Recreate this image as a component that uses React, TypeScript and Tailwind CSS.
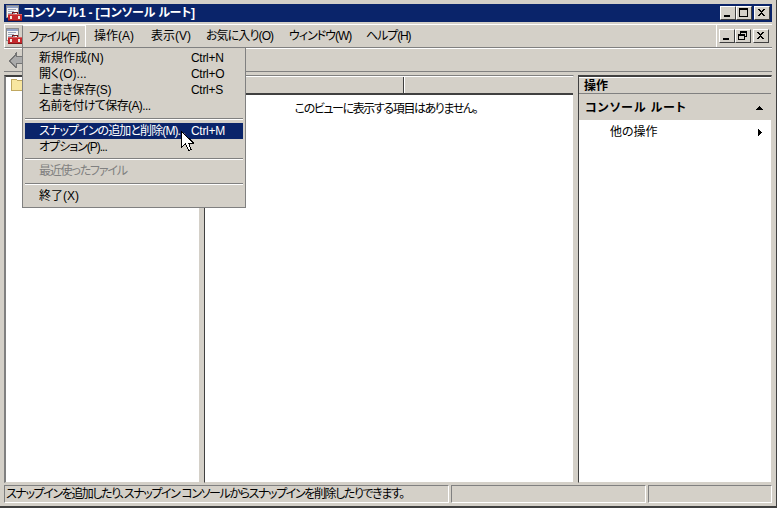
const FONT = "font-['Liberation_Sans','Noto_Sans_CJK_JP',sans-serif] [font-feature-settings:'palt']";

function AppIcon() {
  return (
    <svg width="16" height="16" viewBox="0 0 16 16" shapeRendering="crispEdges" className="shrink-0">
      <rect x="0.5" y="0.5" width="12" height="12" fill="#f4f4f4" stroke="#8a8a8a" />
      <rect x="1" y="1" width="11" height="2" fill="#8fa0c4" />
      <rect x="2" y="4" width="8" height="1" fill="#9aa4b8" />
      <rect x="2" y="6" width="6" height="1" fill="#9aa4b8" />
      <rect x="2" y="8" width="7" height="1" fill="#9aa4b8" />
      <rect x="6.5" y="7.5" width="5" height="2" fill="none" stroke="#7a1818" />
      <rect x="2" y="9" width="14" height="7" fill="#c4282c" />
      <rect x="2" y="9" width="14" height="1" fill="#e06060" />
      <rect x="2" y="15" width="14" height="1" fill="#801818" />
      <rect x="4" y="11" width="2" height="3" fill="#f0e8e0" />
      <rect x="12" y="11" width="2" height="3" fill="#f0e8e0" />
    </svg>
  );
}

function CaptionBtn({ kind }: { kind: "min" | "max" | "restore" | "close" }) {
  return (
    <div className="w-4 h-[14px] bg-[#d4d0c8] border-t border-l border-t-white border-l-white border-r border-b border-r-[#404040] border-b-[#404040] flex items-center justify-center">
      <svg width="12" height="10" viewBox="0 0 12 10" shapeRendering="crispEdges">
        {kind === "min" && <rect x="2" y="7" width="6" height="2" fill="#000" />}
        {kind === "max" && (
          <>
            <rect x="1.5" y="0.5" width="8" height="8" fill="none" stroke="#000" />
            <rect x="1" y="1" width="9" height="1" fill="#000" />
          </>
        )}
        {kind === "restore" && (
          <>
            <rect x="3.5" y="0.5" width="6" height="5" fill="none" stroke="#000" />
            <rect x="3" y="1" width="7" height="1" fill="#000" />
            <rect x="1.5" y="3.5" width="6" height="5" fill="#d4d0c8" stroke="#000" />
            <rect x="1" y="4" width="7" height="1" fill="#000" />
          </>
        )}
        {kind === "close" && (
          <path d="M2 1h2v1h1v1h1V2h1V1h2v1H8v1H7v1H6v1h1v1h1v1h1v1H7V7H6V6H5v1H4v1H2V7h1V6h1V5h1V4H4V3H3V2H2z" fill="#000" />
        )}
      </svg>
    </div>
  );
}

function MenuItem({ label, shortcut, active, disabled, track = "" }: { label: string; shortcut?: string; active?: boolean; disabled?: boolean; track?: string }) {
  return (
    <div
      className={`h-4 flex items-center pl-[14px] mx-[2px] whitespace-nowrap ${active ? "bg-[#0a246a] text-white" : disabled ? "text-[#808080]" : "text-black"}`}
    >
      <span className={`w-[152px] ${track}`}>{label}</span>
      {shortcut && <span className="tracking-[-0.3px]">{shortcut}</span>}
    </div>
  );
}

function Sep({ top, bottom }: { top: string; bottom: string }) {
  return <div className={`mx-[2px] h-[2px] border-t border-t-[#808080] border-b border-b-white ${top} ${bottom}`} />;
}

const MENUS = [
  { label: "操作(A)", cls: "w-[57px]" },
  { label: "表示(V)", cls: "w-[55px]" },
  { label: "お気に入り(O)", cls: "w-[83px] tracking-[-0.9px]" },
  { label: "ウィンドウ(W)", cls: "w-[77px] tracking-[-1px]" },
  { label: "ヘルプ(H)", cls: "w-[60px] tracking-[-1.1px]" },
];

export default function App() {
  return (
    <div className={`relative w-[777px] h-[508px] bg-[#d4d0c8] text-xs leading-4 text-black overflow-hidden flex flex-col border-b-2 border-b-[#404040] border-r border-r-[#404040] pt-[4px] px-[4px] ${FONT}`}>
      {/* Title bar */}
      <div className="h-[18px] shrink-0 bg-[#0a246a] flex items-center pl-[2px] pr-[2px]">
        <AppIcon />
        <span className="ml-[1px] text-white font-bold text-xs tracking-[-0.2px] whitespace-nowrap">コンソール1 - [コンソール ルート]</span>
        <div className="ml-auto flex items-center">
          <CaptionBtn kind="min" />
          <CaptionBtn kind="max" />
          <div className="w-[2px]" />
          <CaptionBtn kind="close" />
        </div>
      </div>

      {/* Menu bar */}
      <div className="h-[24px] mt-[2px] shrink-0 flex items-center border-t border-t-white border-b border-b-[#808080] border-l border-l-white">
        <div className="pl-[1px] w-[17px]"><AppIcon /></div>
        <div className="h-[22px] w-[64px] flex items-center justify-center border-t border-l border-r border-t-white border-l-[#808080] border-r-white tracking-[-1px] whitespace-nowrap">ファイル(F)</div>
        <div className="flex items-center whitespace-nowrap pl-[8px]">
          {MENUS.map((m) => (
            <span key={m.label} className={m.cls}>{m.label}</span>
          ))}
        </div>
        <div className="ml-auto h-full w-[56px] border-l border-l-white flex items-center justify-end pr-[3px]">
          <CaptionBtn kind="min" />
          <CaptionBtn kind="restore" />
          <div className="w-[2px]" />
          <CaptionBtn kind="close" />
        </div>
      </div>

      {/* Toolbar */}
      <div className="h-[24px] shrink-0 flex items-center border-t border-t-white border-b border-b-[#808080] pl-[5px]">
        <svg width="16" height="16" viewBox="0 0 16 16" shapeRendering="crispEdges">
          <path d="M7.5 0.5v4h8v7h-8v4h-1v-1h-1v-1h-1v-1h-1v-1h-1v-1h-1v-1h-1v-1h1v-1h1v-1h1v-1h1v-1h1v-1h1v-1z" fill="#ababab" stroke="#747474" />
        </svg>
      </div>

      {/* Panes */}
      <div className="flex-1 min-h-0 flex mt-[3px] mb-[2px]">
        <div className="w-[196px] shrink-0 bg-white border-t-2 border-l-2 border-t-[#404040] border-l-[#808080] border-r border-b border-r-[#d4d0c8] border-b-[#d4d0c8] pl-[4px] pt-[1px]">
          <svg width="16" height="14" viewBox="0 0 16 14" shapeRendering="crispEdges">
            <path d="M1.5 1.5h5l1 1h7v10h-13z" fill="#f8e6a0" stroke="#c0a860" />
          </svg>
        </div>
        <div className="w-[4px] shrink-0" />
        <div className="w-[370px] shrink-0 bg-white flex flex-col border-l border-l-[#404040] border-t border-t-[#808080] border-r border-r-[#d4d0c8] border-b border-b-[#d4d0c8]">
          <div className="h-[19px] shrink-0 flex bg-[#d4d0c8] border-t border-t-white border-b-2 border-b-[#404040]">
            <div className="w-[199px] border-r border-r-[#404040]" />
            <div className="flex-1 border-l border-l-white" />
          </div>
          <div className="mt-[6px] text-center pr-[6px] tracking-[-1.4px]">このビューに表示する項目はありません。</div>
        </div>
        <div className="w-[4px] shrink-0" />
        <div className="flex-1 bg-white flex flex-col border-t-2 border-l border-t-[#404040] border-l-[#404040] border-r border-r-[#d4d0c8] border-b border-b-[#d4d0c8]">
          <div className="h-[17px] shrink-0 bg-[#d4d0c8] border-t border-t-white border-b border-b-[#808080] font-bold pl-[5px] flex items-center">操作</div>
          <div className="h-[26px] shrink-0 bg-[#d4d0c8] flex items-center pl-[6px] pr-[8px] pt-[2px] font-bold">
            <span className="tracking-[0.9px]">コンソール ルート</span>
            <svg width="7" height="4" viewBox="0 0 7 4" className="ml-auto" shapeRendering="crispEdges">
              <path d="M3 0h1v1h1v1h1v1h1v1H0V3h1V2h1V1h1z" fill="#000" />
            </svg>
          </div>
          <div className="h-[24px] shrink-0 flex items-center pl-[31px] pr-[9px]">
            <span>他の操作</span>
            <svg width="4" height="7" viewBox="0 0 4 7" className="ml-auto" shapeRendering="crispEdges">
              <path d="M0 0h1v1h1v1h1v1h1v1H3v1H2v1H1v1H0z" fill="#000" />
            </svg>
          </div>
        </div>
      </div>

      {/* Status bar */}
      <div className="h-[18px] shrink-0 flex gap-[2px] mb-[3px]">
        <div className="w-[445px] border-t border-l border-t-[#808080] border-l-[#808080] border-r border-b border-r-white border-b-white pl-[1px] flex items-center whitespace-nowrap tracking-[-1.4px] overflow-hidden">
          スナップインを追加したり、スナップイン コンソールからスナップインを削除したりできます。
        </div>
        <div className="w-[195px] border-t border-l border-t-[#808080] border-l-[#808080] border-r border-b border-r-white border-b-white" />
        <div className="flex-1 border-t border-l border-t-[#808080] border-l-[#808080] border-r border-b border-r-white border-b-white" />
      </div>

      {/* File menu dropdown */}
      <div className="absolute left-[22px] top-[47px] w-[224px] h-[161px] bg-[#d4d0c8] border border-[#808080] pt-[2px]">
        <MenuItem label="新規作成(N)" shortcut="Ctrl+N" />
        <MenuItem label="開く(O)..." shortcut="Ctrl+O" />
        <MenuItem label="上書き保存(S)" shortcut="Ctrl+S" track="tracking-[-0.3px]" />
        <MenuItem label="名前を付けて保存(A)..." track="tracking-[-0.6px]" />
        <Sep top="mt-[4px]" bottom="mb-[3px]" />
        <MenuItem label="スナップインの追加と削除(M)..." shortcut="Ctrl+M" active track="tracking-[-0.9px]" />
        <MenuItem label="オプション(P)..." track="tracking-[-1px]" />
        <Sep top="mt-[3px]" bottom="mb-[3px]" />
        <MenuItem label="最近使ったファイル" disabled track="tracking-[-1.2px]" />
        <Sep top="mt-[4px]" bottom="mb-[3px]" />
        <MenuItem label="終了(X)" />
      </div>

      {/* Cursor */}
      <svg width="13" height="20" viewBox="0 0 13 20" className="absolute left-[181px] top-[131px]" shapeRendering="crispEdges">
        <path d="M0.5 0.5V16.5L4.5 12.5L7.5 19.5L10 18.5L7.5 12H12.5Z" fill="#fff" stroke="#000" />
      </svg>
    </div>
  );
}
